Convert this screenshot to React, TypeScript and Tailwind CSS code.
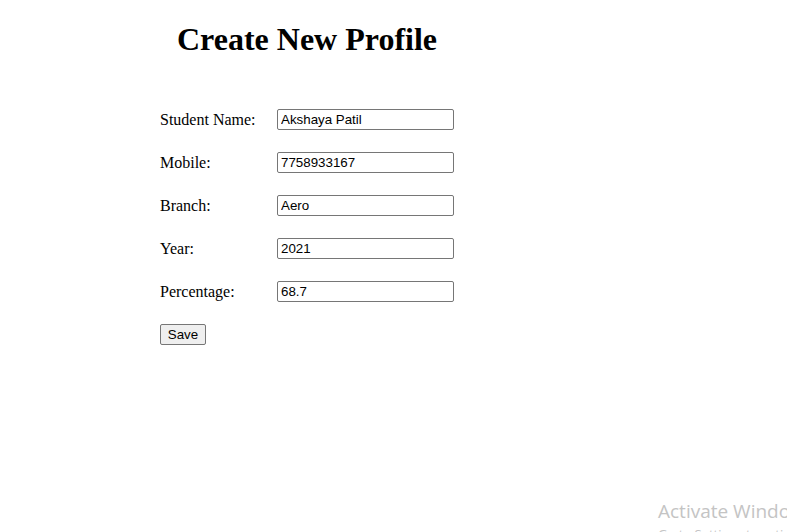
import React from "react";

const FIELDS = [
  { label: "Student Name:", value: "Akshaya Patil" },
  { label: "Mobile:", value: "7758933167" },
  { label: "Branch:", value: "Aero" },
  { label: "Year:", value: "2021" },
  { label: "Percentage:", value: "68.7" },
];

export default function App() {
  return (
    <div className="relative h-[532px] w-full overflow-hidden bg-white text-black font-['Liberation_Serif','Times_New_Roman',serif]">
      <div className="ml-[160px] w-[294px]">
        <h1 className="mt-[21px] text-center text-[32px] font-bold leading-[37px]">Create New Profile</h1>

        <form className="mt-[40px]" onSubmit={(e) => e.preventDefault()}>
          {FIELDS.map((f) => (
            <div key={f.label} className="flex h-[43px] items-center">
              <label className="w-[117px] text-[16px]">{f.label}</label>
              <input
                type="text"
                defaultValue={f.value}
                className="h-[21px] w-[177px] rounded-[2px] border border-[#767676] px-[3px] text-[13.33px] font-['Liberation_Sans',Arial,sans-serif] text-black outline-none"
              />
            </div>
          ))}
          <button
            type="submit"
            className="mt-[11px] h-[21px] w-[46px] rounded-[2px] border border-[#767676] bg-[#efefef] text-[13.33px] font-['Liberation_Sans',Arial,sans-serif] leading-none"
          >
            Save
          </button>
        </form>
      </div>

      {/* windows watermark */}
      <div className="pointer-events-none absolute left-[658px] top-[498px] whitespace-nowrap font-['Open_Sans','Noto_Sans',sans-serif] text-[#c4c4c4]">
        <div className="text-[19px] leading-[27px]">Activate Windows</div>
        <div className="text-[13px] leading-[18px]">Go to Settings to activate Windows.</div>
      </div>
    </div>
  );
}
